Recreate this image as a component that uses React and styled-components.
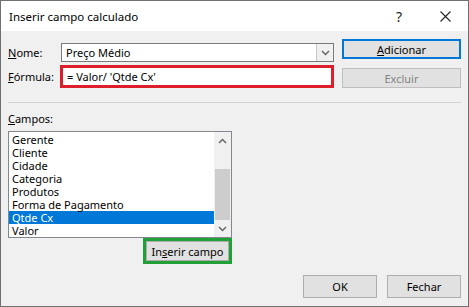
import React from 'react';
import styled, { createGlobalStyle } from 'styled-components';

const GlobalStyle = createGlobalStyle`
    html, body {
        margin: 0;
        padding: 0;
        background: #ffffff;
    }
    * {
        box-sizing: border-box;
    }
`;

const Dialog = styled.div`
    width: 469px;
    height: 307px;
    border: 1px solid #707070;
    background: #f0f0f0;
    font-family: "Noto Sans", "Open Sans", sans-serif;
    font-size: 11px;
    color: #000;
    display: flex;
    flex-direction: column;
`;
const TitleBar = styled.div`
    height: 30px;
    background: #ffffff;
    display: flex;
    align-items: center;
    padding-left: 8px;
`;
const Title = styled.span`
    flex: 1;
    font-size: 11.5px;
`;
const TitleButton = styled.div`
    width: 46px;
    height: 30px;
    display: flex;
    align-items: center;
    justify-content: center;
    font-size: 14px;
    color: #222;
`;
const Body = styled.div`
    flex: 1;
    padding: 0 6px;
    display: flex;
    flex-direction: column;
`;
const TopArea = styled.div`
    display: flex;
    gap: 8px;
`;
const FormColumn = styled.div`
    width: 327px;
    padding-top: 12px;
    display: flex;
    flex-direction: column;
    gap: 3px;
`;
const FormRow = styled.div`
    display: flex;
    align-items: center;
`;
const Label = styled.label`
    width: 54px;
    padding-left: 1px;
`;
const Combo = styled.div`
    width: 273px;
    height: 19px;
    border: 1px solid #7a7a7a;
    background: #fff;
    display: flex;
    align-items: center;
`;
const ComboText = styled.span`
    flex: 1;
    padding-left: 4px;
`;
const ComboArrow = styled.div`
    width: 17px;
    height: 17px;
    border-left: 1px solid #c8c8c8;
    background: #f0f0f0;
    display: flex;
    align-items: center;
    justify-content: center;
`;
const FormulaBox = styled.div`
    width: 274px;
    height: 23px;
    margin-left: -1px;
    border: 3px solid #dc1f2a;
    background: #fff;
    display: flex;
    align-items: center;
    padding-left: 4px;
`;
const ButtonColumn = styled.div`
    width: 119px;
    padding-top: 8px;
    display: flex;
    flex-direction: column;
    gap: 9px;
`;
const Button = styled.div`
    height: ${p => p.$h || 20}px;
    width: ${p => (p.$w ? `${p.$w}px` : 'auto')};
    background: #e1e1e1;
    border: ${p => (p.$default ? '2px solid #0078d7' : p.$disabled ? '1px solid #bfbfbf' : '1px solid #adadad')};
    color: ${p => (p.$disabled ? '#838383' : '#000')};
    display: flex;
    align-items: center;
    justify-content: center;
`;
const Separator = styled.div`
    height: 1px;
    margin: 14px 1px 0 1px;
    background: #d5d5d5;
`;
const FieldsLabel = styled.div`
    margin-top: 8px;
    padding-left: 1px;
    height: 20px;
`;
const ListBox = styled.div`
    width: 224px;
    height: 107px;
    margin-left: 1px;
    border: 1px solid #828790;
    background: #fff;
    display: flex;
`;
const ListItems = styled.div`
    flex: 1;
    padding-top: 1px;
`;
const ListItem = styled.div`
    height: 13px;
    line-height: 13px;
    padding-left: 3px;
    background: ${p => (p.$selected ? '#0078d7' : 'transparent')};
    color: ${p => (p.$selected ? '#fff' : '#000')};
`;
const ScrollBar = styled.div`
    width: 17px;
    background: #f0f0f0;
    display: flex;
    flex-direction: column;
`;
const ScrollArrow = styled.div`
    height: 17px;
    display: flex;
    align-items: center;
    justify-content: center;
`;
const ScrollTrack = styled.div`
    flex: 1;
    display: flex;
    flex-direction: column;
    padding: 0 1px;
`;
const ScrollThumb = styled.div`
    margin-top: 20px;
    height: 51px;
    background: #cdcdcd;
`;
const InsertRow = styled.div`
    width: 225px;
    display: flex;
    justify-content: flex-end;
`;
const Highlight = styled.div`
    border: 3px solid #21a038;
`;
const Footer = styled.div`
    margin-top: auto;
    margin-bottom: 8px;
    display: flex;
    justify-content: flex-end;
    gap: 10px;
    padding-right: 1px;
`;

const Chevron = ({ up }) => (
    <svg width="9" height="6" viewBox="0 0 9 6">
        <path d={up ? 'M1 5 L4.5 1.5 L8 5' : 'M1 1 L4.5 4.5 L8 1'} fill="none" stroke="#606060" strokeWidth="1.4" />
    </svg>
);

const fields = ['Gerente', 'Cliente', 'Cidade', 'Categoria', 'Produtos', 'Forma de Pagamento', 'Qtde Cx', 'Valor'];

const App = () => (
    <>
        <GlobalStyle />
        <Dialog>
            <TitleBar>
                <Title>Inserir campo calculado</Title>
                <TitleButton>?</TitleButton>
                <TitleButton>
                    <svg width="11" height="11" viewBox="0 0 11 11">
                        <path d="M0.5 0.5 L10.5 10.5 M10.5 0.5 L0.5 10.5" stroke="#222" strokeWidth="1.1" />
                    </svg>
                </TitleButton>
            </TitleBar>
            <Body>
                <TopArea>
                    <FormColumn>
                        <FormRow>
                            <Label><u>N</u>ome:</Label>
                            <Combo>
                                <ComboText>Preço Médio</ComboText>
                                <ComboArrow><Chevron /></ComboArrow>
                            </Combo>
                        </FormRow>
                        <FormRow>
                            <Label><u>F</u>órmula:</Label>
                            <FormulaBox>= Valor/ 'Qtde Cx'</FormulaBox>
                        </FormRow>
                    </FormColumn>
                    <ButtonColumn>
                        <Button $default><span><u>A</u>dicionar</span></Button>
                        <Button $disabled>Excluir</Button>
                    </ButtonColumn>
                </TopArea>
                <Separator />
                <FieldsLabel><u>C</u>ampos:</FieldsLabel>
                <ListBox>
                    <ListItems>
                        {fields.map(f => (
                            <ListItem key={f} $selected={f === 'Qtde Cx'}>{f}</ListItem>
                        ))}
                    </ListItems>
                    <ScrollBar>
                        <ScrollArrow><Chevron up /></ScrollArrow>
                        <ScrollTrack><ScrollThumb /></ScrollTrack>
                        <ScrollArrow><Chevron /></ScrollArrow>
                    </ScrollBar>
                </ListBox>
                <InsertRow>
                    <Highlight>
                        <Button $w={83}><span>In<u>s</u>erir campo</span></Button>
                    </Highlight>
                </InsertRow>
                <Footer>
                    <Button $w={74} $h={23}>OK</Button>
                    <Button $w={74} $h={23}>Fechar</Button>
                </Footer>
            </Body>
        </Dialog>
    </>
);

export default App;
